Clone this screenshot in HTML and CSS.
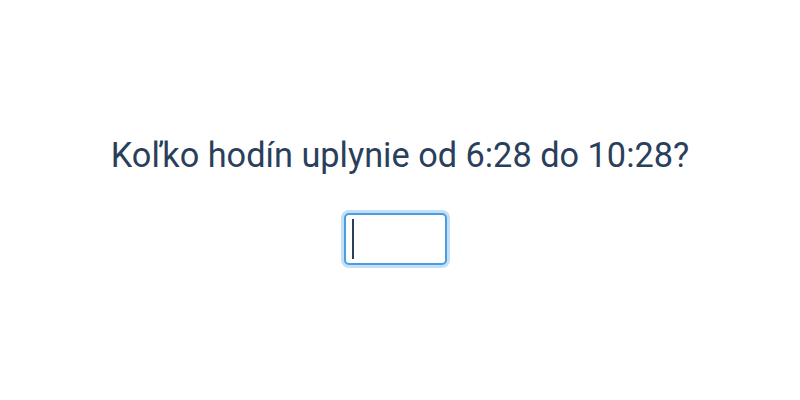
FILE: index.html
```html
<!DOCTYPE html>
<html lang="sk">
<head>
<meta charset="utf-8">
<link rel="stylesheet" href="styles.css">
</head>
<body>
<main class="page">
  <p class="question">Koľko hodín uplynie od 6:28 do 10:28?</p>
  <div class="field">
    <input class="answer" type="text" aria-label="odpoveď">
    <span class="caret"></span>
  </div>
</main>
</body>
</html>
```
FILE: styles.css
```css
html, body {
  margin: 0;
  padding: 0;
  background: #ffffff;
}
.page {
  width: 800px;
  height: 400px;
  display: flex;
  flex-direction: column;
  align-items: center;
  padding-top: 135px;
  box-sizing: border-box;
  font-family: Roboto, "Noto Sans", sans-serif;
  color: #2a3f5c;
}
.question {
  margin: 0;
  font-size: 34.3px;
  line-height: 40px;
}
.field {
  position: relative;
  margin-top: 38px;
  margin-right: 10px;
}
.answer {
  display: block;
  width: 103px;
  height: 52px;
  box-sizing: border-box;
  border: 2px solid #4a9de0;
  border-radius: 5px;
  box-shadow: 0 0 0 3px #c3e0f7;
  outline: none;
  padding: 0 8px;
  font-family: Roboto, sans-serif;
  font-size: 32px;
  color: #2a3f5c;
  background: #fff;
}
.caret {
  position: absolute;
  left: 8px;
  top: 6px;
  width: 2px;
  height: 40px;
  background: #2a3f5c;
}
```
